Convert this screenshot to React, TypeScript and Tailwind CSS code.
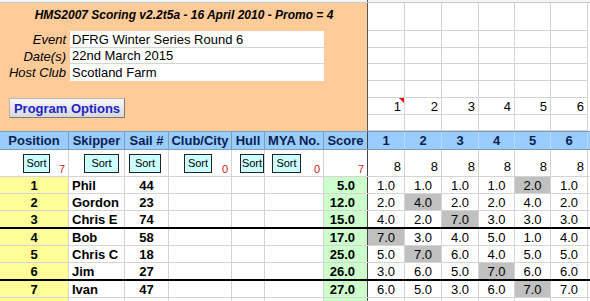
import React from "react";

const W = [
  "w-[69px]",
  "w-[56px]",
  "w-[44px]",
  "w-[63px]",
  "w-[33px]",
  "w-[59px]",
  "w-[44px]",
  "w-[37px]",
  "w-[37px]",
  "w-[37px]",
  "w-[36px]",
  "w-[36px]",
  "w-[37px]",
];

const RW = ["w-[37px]", "w-[37px]", "w-[37px]", "w-[36px]", "w-[36px]", "w-[37px]"];

const headers = ["Position", "Skipper", "Sail #", "Club/City", "Hull", "MYA No.", "Score", "1", "2", "3", "4", "5", "6"];

type Row = { pos: number; name: string; sail: string; score: string; r: string[]; d: number };
const rows: Row[] = [
  { pos: 1, name: "Phil", sail: "44", score: "5.0", r: ["1.0", "1.0", "1.0", "1.0", "2.0", "1.0"], d: 4 },
  { pos: 2, name: "Gordon", sail: "23", score: "12.0", r: ["2.0", "4.0", "2.0", "2.0", "4.0", "2.0"], d: 1 },
  { pos: 3, name: "Chris E", sail: "74", score: "15.0", r: ["4.0", "2.0", "7.0", "3.0", "3.0", "3.0"], d: 2 },
  { pos: 4, name: "Bob", sail: "58", score: "17.0", r: ["7.0", "3.0", "4.0", "5.0", "1.0", "4.0"], d: 0 },
  { pos: 5, name: "Chris C", sail: "18", score: "25.0", r: ["5.0", "7.0", "6.0", "4.0", "5.0", "5.0"], d: 1 },
  { pos: 6, name: "Jim", sail: "27", score: "26.0", r: ["3.0", "6.0", "5.0", "7.0", "6.0", "6.0"], d: 3 },
  { pos: 7, name: "Ivan", sail: "47", score: "27.0", r: ["6.0", "5.0", "3.0", "6.0", "7.0", "7.0"], d: 4 },
];

const topRowH = ["h-[28px]", "h-[17px]", "h-[16px]", "h-[17px]", "h-[17px]", "h-[17px]", "h-[16px]"];

function SortBtn({ w }: { w: string }) {
  return (
    <div
      className={`${w} h-[19px] bg-[#ccffff] border border-[#222] flex items-center justify-center overflow-hidden text-[11px] text-black leading-none`}
    >
      Sort
    </div>
  );
}

function Red({ v }: { v: string }) {
  return <span className="absolute right-[3px] bottom-[1px] text-[11px] leading-none text-[#d42020]">{v}</span>;
}

export default function App() {
  return (
    <div className="w-[590px] h-[301px] overflow-hidden bg-white text-[13px] text-black font-['Liberation_Sans',Arial,sans-serif] leading-none">
      {/* top strip */}
      <div className="h-[3px] bg-[#f4f4f4] border-b border-[#c8c8c8] flex">
        <div className="w-[368px] border-r border-[#555]" />
      </div>

      {/* top area */}
      <div className="flex">
        <div className="w-[368px] h-[128px] bg-[#ffcc99] flex flex-col">
          <div className="h-[28px] flex items-start justify-center pt-[6px] text-[12px] font-bold italic">
            HMS2007 Scoring v2.2t5a - 16 April 2010 - Promo = 4
          </div>
          {[
            ["Event", "DFRG Winter Series Round 6", "h-[17px]"],
            ["Date(s)", "22nd March 2015", "h-[16px]"],
            ["Host Club", "Scotland Farm", "h-[17px]"],
          ].map(([l, v, h], i) => (
            <div key={l} className={`flex ${h}`}>
              <div className="w-[70px] pr-[4px] flex items-center justify-end italic">{l}</div>
              <div
                className={`w-[254px] bg-white flex items-center pl-[2px] ${i < 2 ? "border-b border-[#d4d4d4]" : ""}`}
              >
                {v}
              </div>
            </div>
          ))}
          <div className="h-[17px]" />
          <div className="pl-[9px]">
            <div className="w-[116px] h-[20px] bg-gradient-to-b from-[#f8f8f8] to-[#d8d8d8] border border-[#b4b4b4] border-r-[#7a7a7a] border-b-[#7a7a7a] flex items-center justify-center font-bold text-[#2323c8]">
              Program Options
            </div>
          </div>
        </div>
        <div className="flex-1 flex flex-col border-l border-[#555] -ml-px">
          {topRowH.map((h, ri) => (
            <div key={ri} className={`flex ${h}`}>
              {RW.map((w, ci) => (
                <div
                  key={ci}
                  className={`${w} relative border-r border-b border-[#d4d4d4] flex items-center justify-end pr-[3px]`}
                >
                  {ri === 5 ? String(ci + 1) : ""}
                  {ri === 5 && ci === 0 ? (
                    <span className="absolute right-0 top-0 w-0 h-0 border-t-[5px] border-t-[#e01010] border-l-[5px] border-l-transparent" />
                  ) : null}
                </div>
              ))}
            </div>
          ))}
        </div>
      </div>

      {/* header row */}
      <div className="flex h-[19px] bg-[#99ccff] border-t border-b border-[#7f9db9]">
        {headers.map((h, i) => (
          <div
            key={i}
            className={`${W[i]} flex items-center justify-center font-bold text-[#0b1f4f] border-r ${
              i === 6 ? "border-[#444]" : i > 6 ? "border-[#bcd6f2]" : "border-[#7f9db9]"
            }`}
          >
            {h}
          </div>
        ))}
      </div>

      {/* sort row */}
      <div className="flex h-[27px] border-b border-[#d4d4d4]">
        <div className={`${W[0]} relative flex items-center pl-[23px] border-r border-[#d4d4d4]`}>
          <SortBtn w="w-[27px]" />
          <Red v="7" />
        </div>
        <div className={`${W[1]} relative flex items-center pl-[15px] border-r border-[#d4d4d4]`}>
          <SortBtn w="w-[35px]" />
        </div>
        <div className={`${W[2]} relative flex items-center pl-[4px] border-r border-[#d4d4d4]`}>
          <SortBtn w="w-[32px]" />
        </div>
        <div className={`${W[3]} relative flex items-center pl-[15px] border-r border-[#d4d4d4]`}>
          <SortBtn w="w-[28px]" />
          <Red v="0" />
        </div>
        <div className={`${W[4]} relative flex items-center pl-[8px] border-r border-[#d4d4d4] overflow-hidden`}>
          <SortBtn w="w-[24px]" />
        </div>
        <div className={`${W[5]} relative flex items-center pl-[7px] border-r border-[#d4d4d4]`}>
          <SortBtn w="w-[29px]" />
          <Red v="0" />
        </div>
        <div className={`${W[6]} relative border-r border-[#444]`}>
          <Red v="7" />
        </div>
        {RW.map((w, i) => (
          <div key={i} className={`${w} flex items-end justify-end pr-[3px] pb-[3px] border-r border-[#d4d4d4]`}>
            8
          </div>
        ))}
      </div>

      {/* data rows */}
      {rows.map((r, ri) => {
        const thick = ri === 2 || ri === 5;
        const bb = thick ? "border-b-2 border-b-black" : "border-b border-b-[#d4d4d4]";
        return (
          <div key={ri} className={`flex ${thick ? "h-[18px]" : "h-[17px]"} ${bb}`}>
            <div className={`${W[0]} bg-[#ffff99] flex items-center justify-center font-bold border-r border-r-[#d4d4d4]`}>
              {r.pos}
            </div>
            <div className={`${W[1]} flex items-center pl-[3px] font-bold border-r border-r-[#d4d4d4]`}>{r.name}</div>
            <div className={`${W[2]} flex items-center justify-center font-bold border-r border-r-[#d4d4d4]`}>
              {r.sail}
            </div>
            <div className={`${W[3]} border-r border-r-[#d4d4d4]`} />
            <div className={`${W[4]} border-r border-r-[#d4d4d4]`} />
            <div className={`${W[5]} border-r border-r-[#d4d4d4]`} />
            <div className={`${W[6]} bg-[#ccffcc] flex items-center justify-end pr-[12px] font-bold border-r border-r-[#444]`}>
              {r.score}
            </div>
            {r.r.map((v, ci) => (
              <div
                key={ci}
                className={`${RW[ci]} flex items-center justify-center border-r border-r-[#d4d4d4] ${
                  ci === r.d ? "bg-[#c0c0c0]" : ""
                }`}
              >
                {v}
              </div>
            ))}
          </div>
        );
      })}
      <div className="flex h-[6px]">
        <div className={`${W[0]} bg-[#ffff99] border-r border-r-[#d4d4d4]`} />
        <div className={`${W[1]} border-r border-r-[#d4d4d4]`} />
        <div className={`${W[2]} border-r border-r-[#d4d4d4]`} />
        <div className={`${W[3]} border-r border-r-[#d4d4d4]`} />
        <div className={`${W[4]} border-r border-r-[#d4d4d4]`} />
        <div className={`${W[5]} border-r border-r-[#d4d4d4]`} />
        <div className={`${W[6]} bg-[#ccffcc] border-r border-r-[#444]`} />
        {RW.map((w, i) => (
          <div key={i} className={`${w} border-r border-r-[#d4d4d4]`} />
        ))}
      </div>
    </div>
  );
}
